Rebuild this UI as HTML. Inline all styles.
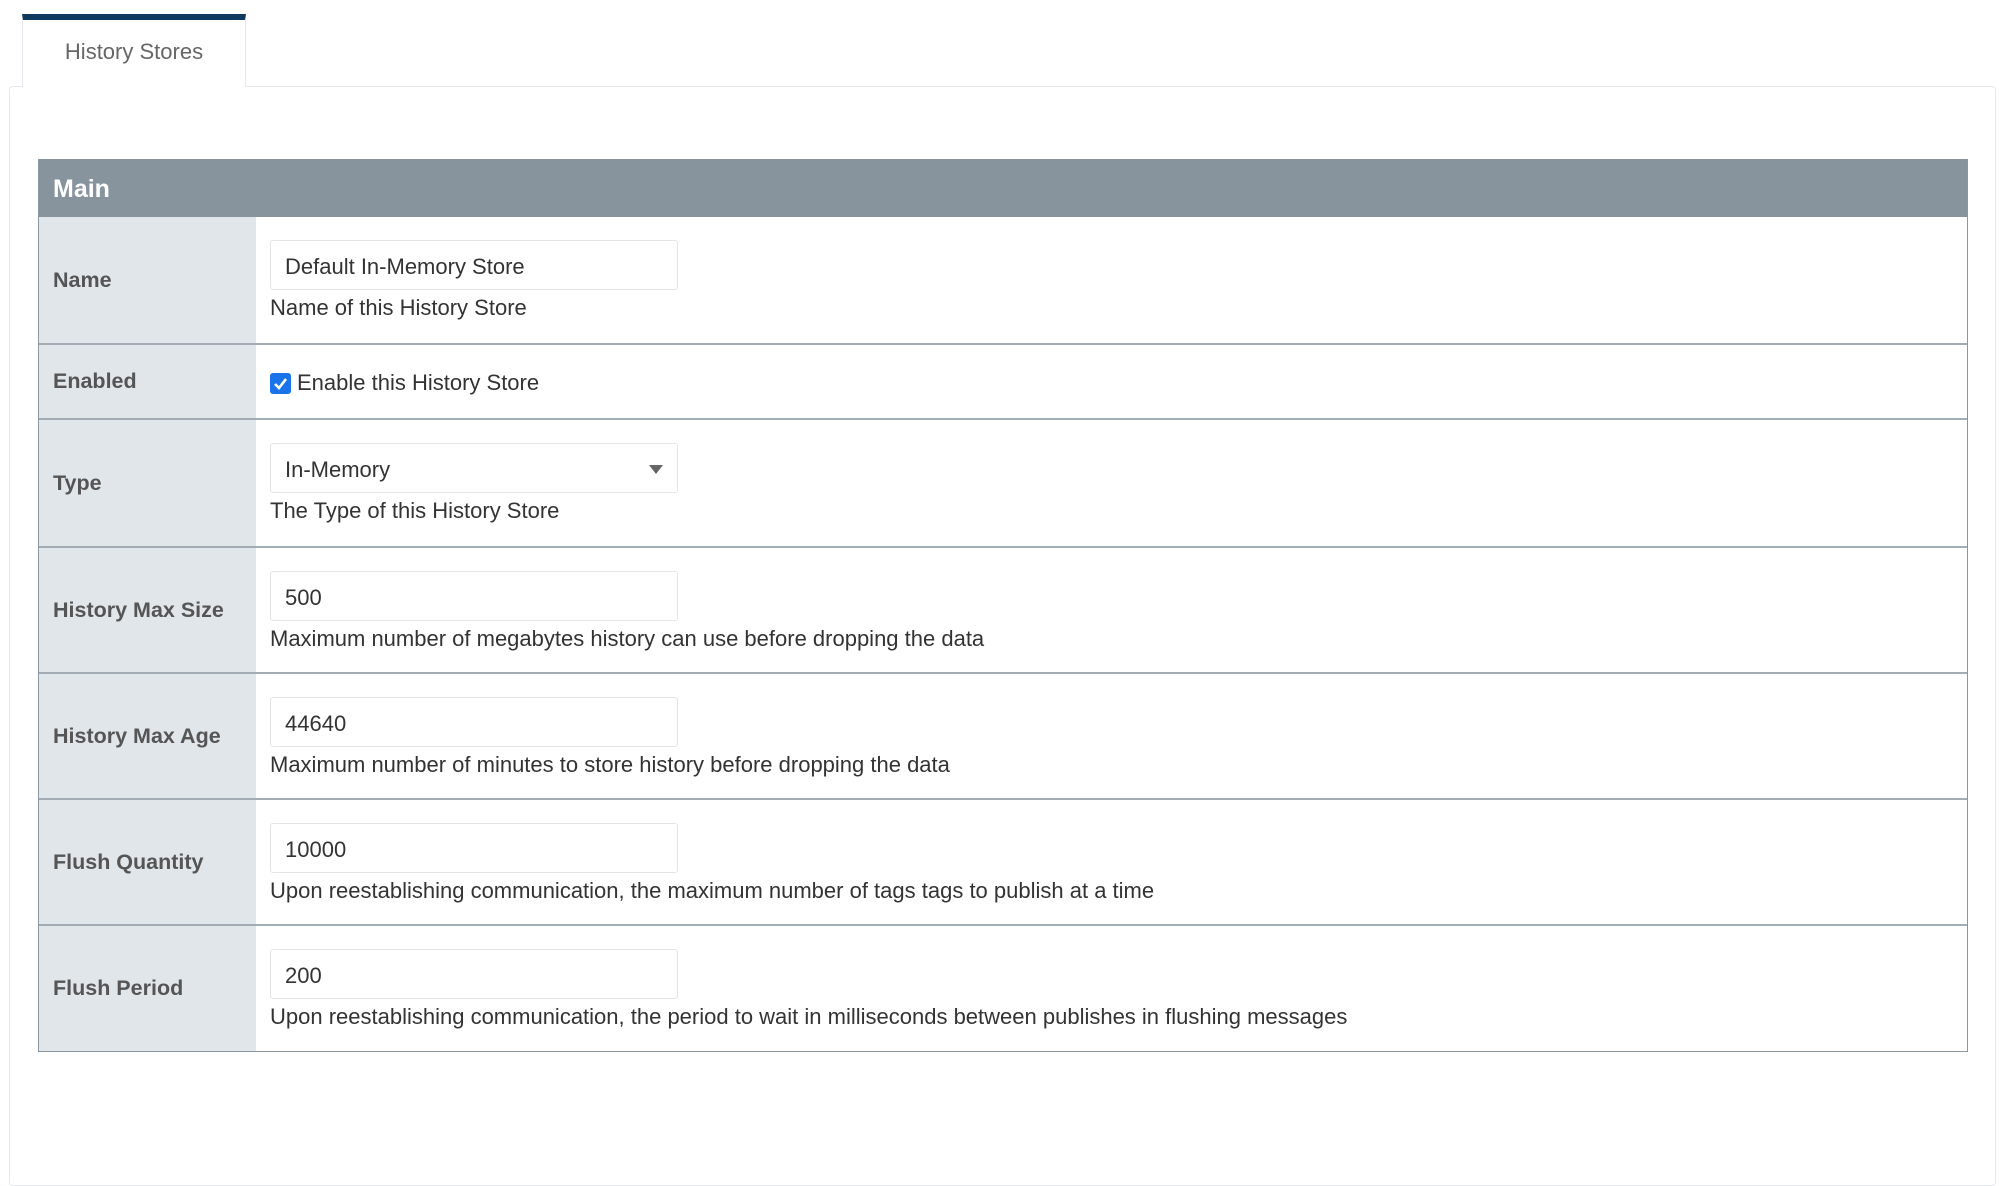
<!DOCTYPE html>
<html><head><meta charset="utf-8"><style>
*{box-sizing:border-box;margin:0;padding:0}
body{width:1999px;height:1082px;background:#fff;font-family:"Liberation Sans",sans-serif;position:relative;overflow:hidden;color:#333}
.tab{position:absolute;left:22px;top:14px;width:224px;height:73px;border-top:6px solid #0f3a5f;border-left:1px solid #e4e8ec;border-right:1px solid #e4e8ec;background:#fff;z-index:2;text-align:center;font-size:22px;color:#666;line-height:64px}
.panel{position:absolute;left:9px;top:86px;width:1987px;height:1100px;border:1px solid #e6e9ec;border-radius:4px}
.tbl{position:absolute;left:38px;top:159px;width:1930px;border:1px solid #8a96a0;border-top:none}
.hdr{height:58px;background:#87939d;color:#fff;font-weight:bold;font-size:25px;line-height:60px;padding-left:14px}
.row{position:relative;border-top:2px solid #a3acb4;display:flex}
.lab{width:217px;background:#e1e6eb;font-weight:bold;font-size:21.5px;color:#555;padding-left:14px;display:flex;align-items:center}
.val{flex:1;position:relative;font-size:22px;color:#333}
.inp{position:absolute;left:14px;top:23px;width:408px;height:50px;border:1px solid #e2e5e8;border-radius:3px;padding-left:14px;line-height:52px;font-size:22px;color:#333}
.help{position:absolute;left:14px;top:77px;line-height:28px;white-space:nowrap}
.arrow{position:absolute;right:14px;top:21px;width:0;height:0;border-left:7px solid transparent;border-right:7px solid transparent;border-top:9px solid #666}
.cb{position:absolute;left:14px;top:28px;width:21px;height:21px;background:#1a73e8;border-radius:3px}
</style></head><body>
<div class="tab">History Stores</div>
<div class="panel"></div>
<div class="tbl">
<div class="hdr">Main</div>
<div class="row" style="height:126px;border-top:none"><div class="lab">Name</div><div class="val"><div class="inp">Default In-Memory Store</div><div class="help">Name of this History Store</div></div></div>
<div class="row" style="height:75px"><div class="lab">Enabled</div><div class="val"><div class="cb"><svg width="21" height="21" viewBox="0 0 21 21"><path d="M5 11l4 4 7-9" stroke="#fff" stroke-width="2.6" fill="none"/></svg></div><div style="position:absolute;left:41px;top:24px;line-height:28px">Enable this History Store</div></div></div>
<div class="row" style="height:128px"><div class="lab">Type</div><div class="val"><div class="inp">In-Memory<div class="arrow"></div></div><div class="help">The Type of this History Store</div></div></div>
<div class="row" style="height:126px"><div class="lab">History Max Size</div><div class="val"><div class="inp">500</div><div class="help">Maximum number of megabytes history can use before dropping the data</div></div></div>
<div class="row" style="height:126px"><div class="lab">History Max Age</div><div class="val"><div class="inp">44640</div><div class="help">Maximum number of minutes to store history before dropping the data</div></div></div>
<div class="row" style="height:126px"><div class="lab">Flush Quantity</div><div class="val"><div class="inp">10000</div><div class="help">Upon reestablishing communication, the maximum number of tags tags to publish at a time</div></div></div>
<div class="row" style="height:127px"><div class="lab">Flush Period</div><div class="val"><div class="inp">200</div><div class="help">Upon reestablishing communication, the period to wait in milliseconds between publishes in flushing messages</div></div></div>
</div>
</body></html>
